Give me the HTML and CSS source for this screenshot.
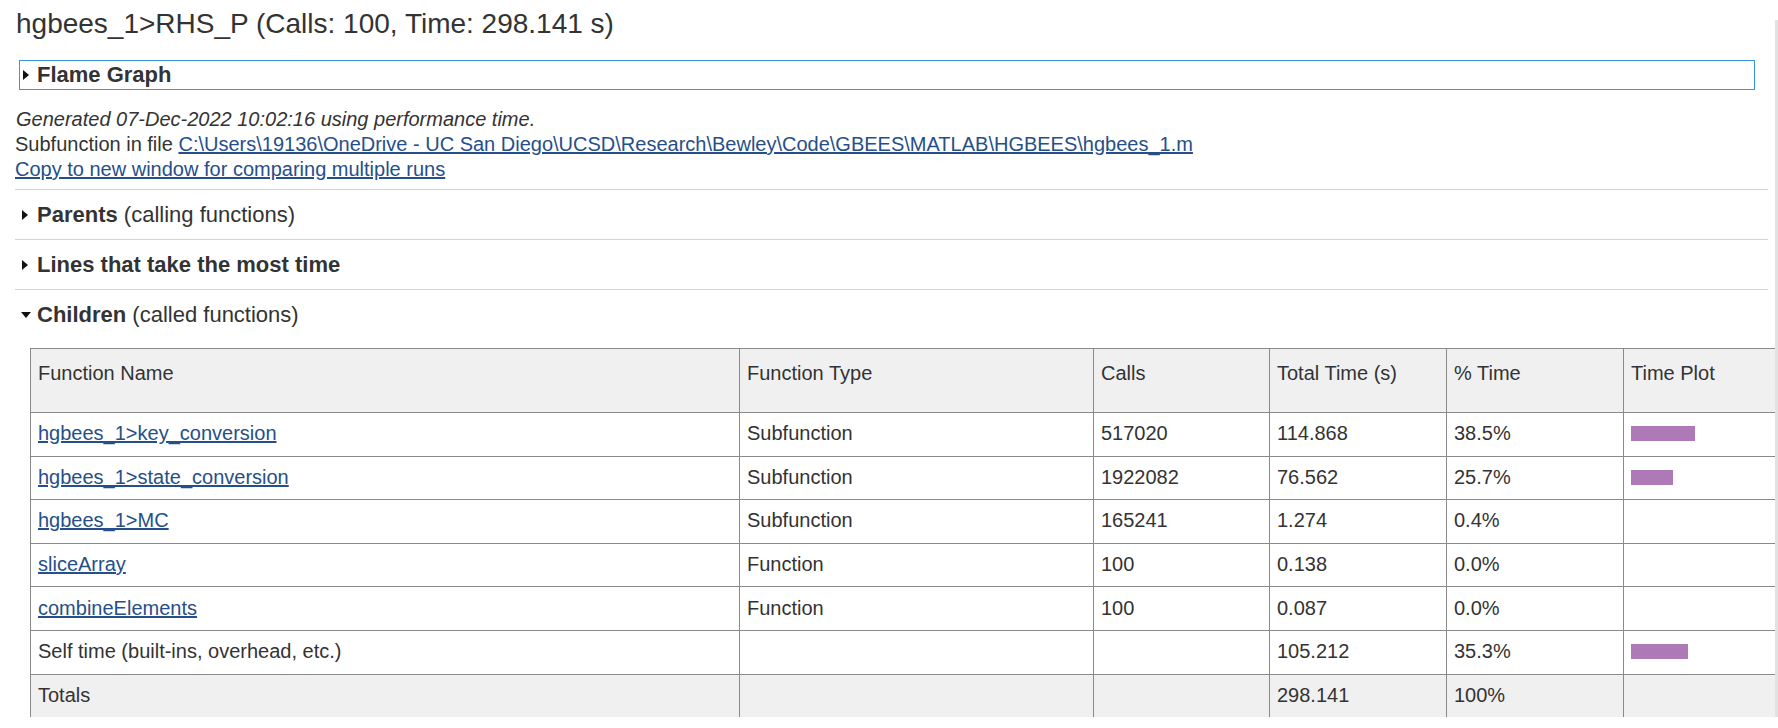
FILE: index.html
```html
<!DOCTYPE html>
<html>
<head>
<meta charset="utf-8">
<link rel="stylesheet" href="styles.css">
</head>
<body>
<div class="page">
  <h1 class="title">hgbees_1&gt;RHS_P (Calls: 100, Time: 298.141 s)</h1>
  <div class="flame"><span class="tri-right"></span><span class="sec-bold">Flame Graph</span></div>
  <div class="meta">
    <div class="gen">Generated 07-Dec-2022 10:02:16 using performance time.</div>
    <div>Subfunction in file <a href="#">C:\Users\19136\OneDrive - UC San Diego\UCSD\Research\Bewley\Code\GBEES\MATLAB\HGBEES\hgbees_1.m</a></div>
    <div><a href="#">Copy to new window for comparing multiple runs</a></div>
  </div>
  <div class="section"><span class="tri-right"></span><span class="sec-bold">Parents</span>&nbsp;<span>(calling functions)</span></div>
  <div class="section"><span class="tri-right"></span><span class="sec-bold">Lines that take the most time</span></div>
  <div class="section"><span class="tri-down"></span><span class="sec-bold">Children</span>&nbsp;<span>(called functions)</span></div>
  <table class="grid">
    <colgroup>
      <col class="c1"><col class="c2"><col class="c3"><col class="c4"><col class="c5"><col class="c6">
    </colgroup>
    <thead>
      <tr><th>Function Name</th><th>Function Type</th><th>Calls</th><th>Total Time (s)</th><th>% Time</th><th>Time Plot</th></tr>
    </thead>
    <tbody>
      <tr><td><a href="#">hgbees_1&gt;key_conversion</a></td><td>Subfunction</td><td>517020</td><td>114.868</td><td>38.5%</td><td><div class="bar" style="width:64px"></div></td></tr>
      <tr><td><a href="#">hgbees_1&gt;state_conversion</a></td><td>Subfunction</td><td>1922082</td><td>76.562</td><td>25.7%</td><td><div class="bar" style="width:42px"></div></td></tr>
      <tr><td><a href="#">hgbees_1&gt;MC</a></td><td>Subfunction</td><td>165241</td><td>1.274</td><td>0.4%</td><td></td></tr>
      <tr><td><a href="#">sliceArray</a></td><td>Function</td><td>100</td><td>0.138</td><td>0.0%</td><td></td></tr>
      <tr><td><a href="#">combineElements</a></td><td>Function</td><td>100</td><td>0.087</td><td>0.0%</td><td></td></tr>
      <tr><td>Self time (built-ins, overhead, etc.)</td><td></td><td></td><td>105.212</td><td>35.3%</td><td><div class="bar" style="width:57px"></div></td></tr>
      <tr class="totals"><td>Totals</td><td></td><td></td><td>298.141</td><td>100%</td><td></td></tr>
    </tbody>
  </table>
  <div class="scrollbar"></div>
</div>
</body>
</html>
```
FILE: styles.css
```css
html, body {
  margin: 0;
  padding: 0;
  background: #ffffff;
}
body {
  font-family: "Liberation Sans", Arial, sans-serif;
  color: #333333;
  font-size: 20px;
}
.page {
  position: relative;
  width: 1775px;
  height: 717px;
  overflow: hidden;
  padding-right: 3px;
}
.title {
  margin: 0;
  padding: 7px 0 0 16px;
  font-size: 28px;
  font-weight: normal;
  line-height: 34px;
  color: #333333;
  white-space: nowrap;
}
.flame {
  margin: 19px 0 0 19px;
  height: 28px;
  border: 1px solid #3b95da;
  display: flex;
  align-items: center;
  padding-left: 3px;
  box-sizing: content-box;
  width: 1731px;
}
.flame .tri-right {
  margin-right: 8px;
}
.sec-bold {
  font-weight: bold;
  font-size: 22px;
}
.tri-right {
  display: inline-block;
  width: 0;
  height: 0;
  border-top: 5px solid transparent;
  border-bottom: 5px solid transparent;
  border-left: 6px solid #111111;
  margin-right: 9px;
}
.tri-down {
  display: inline-block;
  width: 0;
  height: 0;
  border-left: 5px solid transparent;
  border-right: 5px solid transparent;
  border-top: 6px solid #111111;
  margin-right: 6px;
  margin-left: -1px;
}
.meta {
  margin-top: 17px;
  padding-left: 15px;
  line-height: 25px;
  font-size: 20px;
}
.gen {
  font-style: italic;
  padding-left: 1px;
}
a {
  color: #264f8a;
  text-decoration: underline;
}
.section {
  margin-left: 15px;
  width: 1746px;
  border-top: 1px solid #d4d4d4;
  height: 49px;
  display: flex;
  align-items: center;
  padding-left: 7px;
  box-sizing: content-box;
  font-size: 22px;
  white-space: pre;
}
.meta + .section {
  margin-top: 7px;
}
.grid {
  margin: 9px 0 0 30px;
  border-collapse: collapse;
  table-layout: fixed;
  width: 1770px;
  font-size: 20px;
  color: #333333;
}
.grid col.c1 { width: 709px; }
.grid col.c2 { width: 354px; }
.grid col.c3 { width: 176px; }
.grid col.c4 { width: 177px; }
.grid col.c5 { width: 177px; }
.grid col.c6 { width: 177px; }
.grid th, .grid td {
  border: 1px solid #8a8a8a;
  text-align: left;
  padding: 0 7px;
  white-space: nowrap;
}
.grid th {
  font-weight: normal;
  background: #f0f0f0;
  vertical-align: top;
  height: 64px;
  padding-top: 12px;
  box-sizing: border-box;
  line-height: 24px;
}
.grid td {
  height: 40.6px;
  vertical-align: middle;
  line-height: 24px;
  padding-bottom: 2px;
}
.grid tr.totals td {
  background: #f0f0f0;
}
.bar {
  height: 15px;
  background: #ad79b7;
  margin-top: 1px;
}
.scrollbar {
  position: absolute;
  right: 0;
  top: 20px;
  bottom: 0;
  width: 3px;
  background: #e2e2e2;
}
```
